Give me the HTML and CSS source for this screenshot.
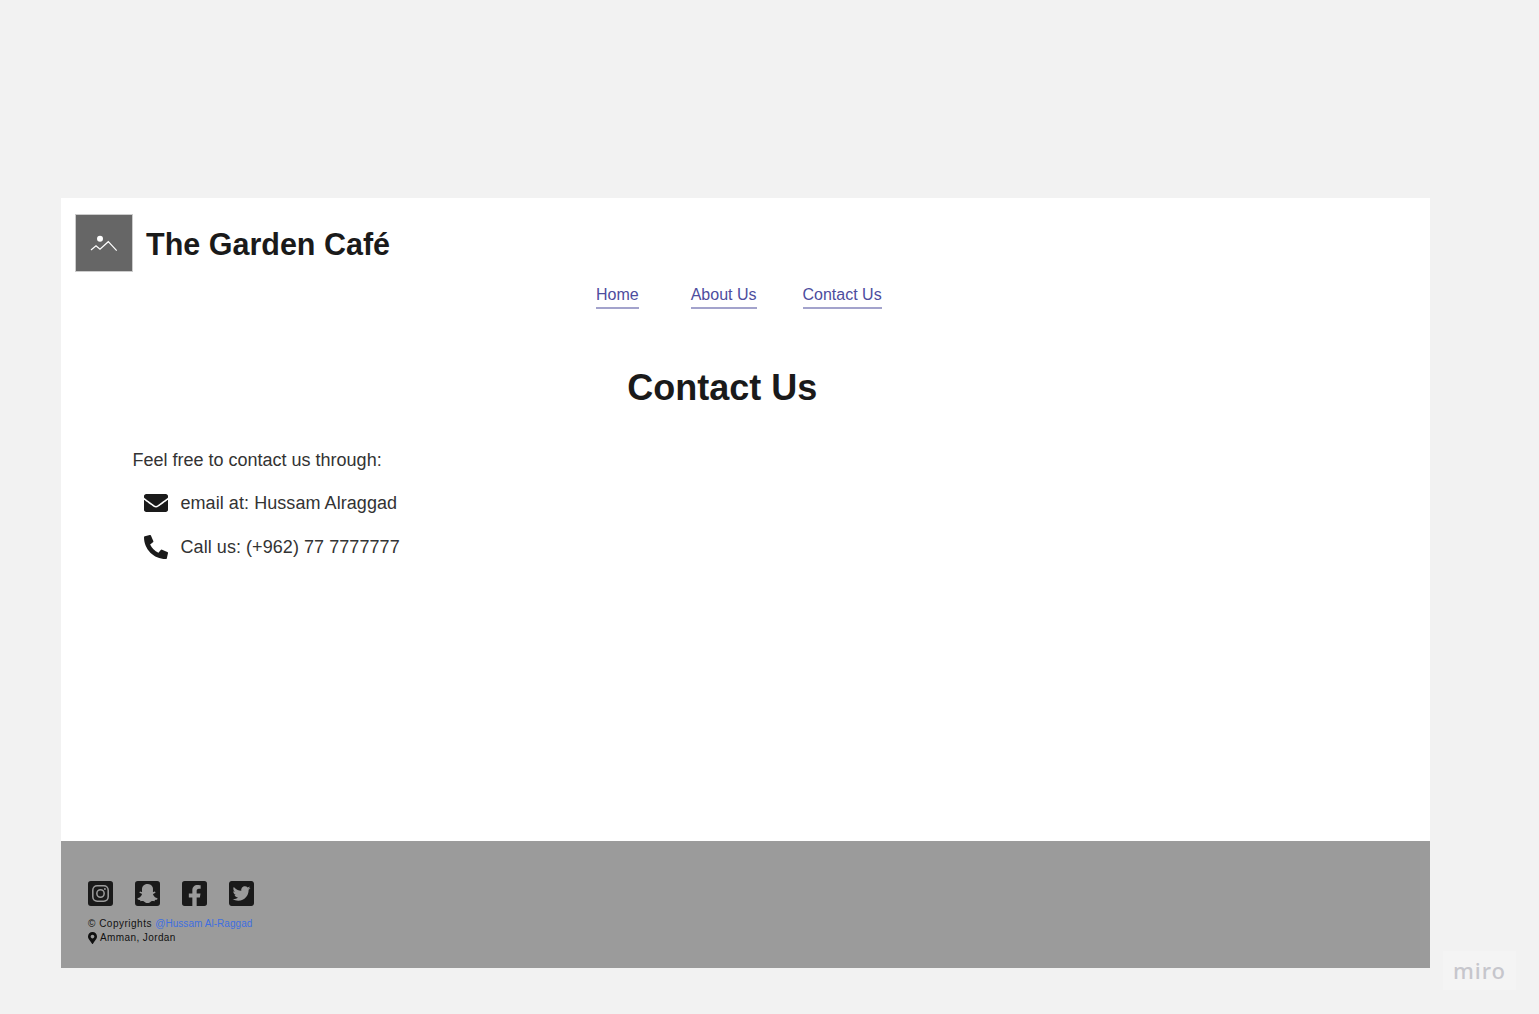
FILE: index.html
```html
<!DOCTYPE html>
<html lang="en">
  <head>
    <meta charset="UTF-8" />
    <title>The Garden Café</title>
    <link rel="stylesheet" href="styles.css">
  </head>
  <body>
    <div class="frame">
      <header>
        <div class="logo">
          <svg width="28" height="18" viewBox="0 0 28 18" fill="none">
            <circle cx="10" cy="4.700" r="3" fill="#fff" />
            <path d="M1 16 L6 11.700 L10 15.300 L18.300 7.700 L26.700 16.700" stroke="#fff" stroke-width="1.200" />
          </svg>
        </div>
        <h1>The Garden Café</h1>
      </header>
      <nav>
        <a href="#" class="home">Home</a>
        <a href="#">About Us</a>
        <a href="#">Contact Us</a>
      </nav>
      <main>
        <h2>Contact Us</h2>
        <p class="intro">Feel free to contact us through:</p>
        <ul>
          <li>
            <svg class="icon" viewBox="0 0 512 512"><path d="M502.3 190.8c3.900-3.100 9.700-.2 9.700 4.700V400c0 26.500-21.500 48-48 48H48c-26.500 0-48-21.500-48-48V195.600c0-5 5.700-7.800 9.700-4.700 22.400 17.400 52.100 39.500 154.100 113.600 21.100 15.400 56.700 47.800 92.200 47.600 35.700.3 72-32.800 92.300-47.600 102-74.100 131.600-96.300 154-113.700zM256 320c23.200.4 56.600-29.200 73.400-41.400 132.700-96.300 142.800-104.700 173.400-128.700 5.800-4.500 9.200-11.500 9.200-18.900v-19c0-26.500-21.500-48-48-48H48C21.500 64 0 85.500 0 112v19c0 7.400 3.400 14.300 9.200 18.900 30.600 23.900 40.700 32.400 173.400 128.700 16.800 12.200 50.200 41.800 73.400 41.400z"/></svg>
            email at: Hussam Alraggad
          </li>
          <li>
            <svg class="icon" viewBox="0 0 512 512"><path d="M497.390 361.800l-112-48a24 24 0 0 0-28 6.900l-49.600 60.600A370.660 370.660 0 0 1 130.600 204.110l60.600-49.600a23.940 23.940 0 0 0 6.900-28l-48-112A24.160 24.160 0 0 0 122.600.61l-104 24A24 24 0 0 0 0 48c0 256.500 207.900 464 464 464a24 24 0 0 0 23.400-18.600l24-104a24.290 24.290 0 0 0-14.010-27.600z"/></svg>
            Call us: (+962) 77 7777777
          </li>
        </ul>
      </main>
      <footer>
        <div class="social">
          <svg viewBox="0 0 26 26">
            <rect width="26" height="26" rx="3" fill="#1a1a1a" />
            <rect x="5" y="5" width="16" height="16" rx="4.500" fill="none" stroke="#9b9b9b" stroke-width="1.600" />
            <circle cx="13" cy="13" r="3.800" fill="none" stroke="#9b9b9b" stroke-width="1.600" />
            <circle cx="17.600" cy="8.400" r="1" fill="#9b9b9b" />
          </svg>
          <svg viewBox="0 0 26 26">
            <rect width="26" height="26" rx="3" fill="#1a1a1a" />
            <g transform="translate(2.500 2.500) scale(.041)">
              <path fill="#9b9b9b" d="M510.846 392.673c-5.211 12.157-27.239 21.089-67.360 27.318-2.064 2.786-3.775 14.686-6.507 23.956-1.625 5.566-5.623 8.869-12.128 8.869l-.297-.005c-9.395 0-19.203-4.323-38.852-4.323-26.521 0-35.662 6.043-56.254 20.588-21.832 15.438-42.771 28.764-74.027 27.399-31.646 2.334-58.025-16.908-72.871-27.404-20.714-14.643-29.828-20.582-56.241-20.582-18.864 0-30.736 4.720-38.852 4.720-8.073 0-11.213-4.922-12.422-9.040-2.703-9.189-4.404-21.263-6.523-24.130-20.679-3.209-67.310-11.344-68.498-32.150a10.627 10.627 0 0 1 8.877-11.069c69.583-11.455 100.924-82.901 102.227-85.934.074-.176.155-.344.237-.515 3.713-7.537 4.544-13.849 2.463-18.753-5.050-11.896-26.872-16.164-36.053-19.796-23.715-9.366-27.015-20.128-25.612-27.504 2.437-12.836 21.725-20.735 33.002-15.453 8.919 4.181 16.843 6.297 23.547 6.297 5.022 0 8.212-1.204 9.960-2.171-2.043-35.936-7.101-87.290 5.687-115.969C158.122 21.304 229.705 15.420 250.826 15.420c.944 0 9.141-.089 10.110-.089 52.148 0 102.254 26.780 126.723 81.643 12.777 28.650 7.749 79.792 5.695 116.009 1.582.872 4.357 1.942 8.599 2.139 6.397-.286 13.815-2.389 22.069-6.257 6.085-2.846 14.406-2.461 20.480.058l.029.010c9.476 3.385 15.439 10.215 15.589 17.870.184 9.747-8.522 18.165-25.878 25.018-2.118.835-4.694 1.655-7.434 2.525-9.797 3.106-24.600 7.805-28.616 17.271-2.079 4.904-1.256 11.211 2.460 18.748.087.168.166.342.239.515 1.301 3.030 32.615 74.460 102.230 85.934 6.427 1.058 11.163 7.877 7.725 15.859z"/>
            </g>
          </svg>
          <svg viewBox="0 32 448 448"><path fill="#1a1a1a" d="M400 32H48A48 48 0 0 0 0 80v352a48 48 0 0 0 48 48h137.250V327.690h-63V256h63v-54.640c0-62.150 37-96.480 93.670-96.480 27.140 0 55.520 4.840 55.520 4.840v61h-31.270c-30.810 0-40.420 19.120-40.420 38.730V256h68.780l-11 71.690h-57.780V480H400a48 48 0 0 0 48-48V80a48 48 0 0 0-48-48z"/></svg>
          <svg viewBox="0 32 448 448"><path fill="#1a1a1a" d="M400 32H48C21.500 32 0 53.500 0 80v352c0 26.500 21.500 48 48 48h352c26.500 0 48-21.500 48-48V80c0-26.500-21.500-48-48-48zm-48.900 158.800c.2 2.800.2 5.700.2 8.500 0 86.700-66 186.600-186.600 186.600-37.200 0-71.700-10.800-100.700-29.400 5.300.6 10.400.8 15.800.8 30.700 0 58.900-10.400 81.400-28-28.800-.6-53-19.500-61.300-45.500 10.100 1.500 19.200 1.500 29.600-1.200-30-6.100-52.500-32.500-52.500-64.400v-.8c8.700 4.900 18.900 7.900 29.600 8.300a65.447 65.447 0 0 1-29.200-54.600c0-12.200 3.200-23.400 8.900-33.100 32.300 39.800 80.800 65.800 135.200 68.600-9.300-44.500 24-80.600 64-80.600 18.900 0 35.900 7.900 47.900 20.700 14.800-2.800 29-8.300 41.600-15.800-4.900 15.200-15.100 28-28.600 36 13.100-1.400 25.800-5 37.500-10.100-8.900 13-20 24.600-32.800 33.800z"/></svg>
        </div>
        <p class="copy">© Copyrights <a href="#">@Hussam Al-Raggad</a></p>
        <p class="place">
          <svg width="9" height="12" viewBox="0 0 384 512"><path fill="#111" d="M172.268 501.670C26.970 291.031 0 268.413 0 192 0 85.961 85.961 0 192 0s192 85.961 192 192c0 76.413-26.970 99.031-172.268 309.670-9.535 13.774-29.930 13.773-39.464 0zM192 272c44.183 0 80-35.817 80-80s-35.817-80-80-80-80 35.817-80 80 35.817 80 80 80z"/></svg>
          Amman, Jordan
        </p>
      </footer>
    </div>
    <div class="badge">miro</div>
  </body>
</html>
```

FILE: styles.css
```css
* {
  box-sizing: border-box;
}

body {
  margin: 0;
  height: 1014px;
  padding: 198px 109px 0 61px;
  background-color: #f2f2f2;
  font-family: "Liberation Sans", Arial, sans-serif;
  overflow: hidden;
}

.frame {
  display: flex;
  flex-direction: column;
  height: 770px;
  background-color: #fff;
}

header {
  display: flex;
  align-items: center;
  gap: 13px;
  padding: 16px 14px 0;
}

.logo {
  display: flex;
  align-items: center;
  justify-content: center;
  width: 58px;
  height: 58px;
  background-color: #666;
  border: 1px solid #ccc;
}

h1 {
  margin: 3px 0 0;
  font-size: 30.500px;
  color: #1a1a1a;
}

nav {
  display: flex;
  gap: 46px;
  margin-top: 14px;
  padding-left: 535px;
}

nav a {
  padding-bottom: 3px;
  border-bottom: 2px solid #a3a3cc;
  font-size: 16px;
  color: #4d4d9e;
  text-decoration: none;
}

nav .home {
  margin-right: 6px;
}

main {
  flex: 1;
  padding: 0 0 0 71.500px;
}

h2 {
  margin: 58px 0 0;
  padding-right: 118px;
  text-align: center;
  font-size: 36px;
  color: #1a1a1a;
}

.intro {
  margin: 41px 0 0;
  font-size: 18px;
  color: #333;
}

ul {
  margin: 10px 0 0;
  padding: 0 0 0 11.500px;
  list-style: none;
}

li {
  display: flex;
  align-items: center;
  gap: 12.500px;
  height: 44px;
  font-size: 18px;
  letter-spacing: .06px;
  color: #333;
}

.icon {
  width: 24px;
  height: 24px;
  fill: #1a1a1a;
}

footer {
  height: 127px;
  padding: 40px 27px 0;
  background-color: #9b9b9b;
}

.social {
  display: flex;
  gap: 22px;
}

.social svg {
  width: 25px;
  height: 25px;
}

.copy,
.place {
  margin: 0;
  font-size: 10px;
  letter-spacing: .4px;
  line-height: 14px;
  color: #111;
}

.copy {
  margin-top: 11px;
  letter-spacing: .5px;
}

.copy a {
  color: #3f6fe0;
  letter-spacing: .05px;
  text-decoration: none;
}

.place {
  display: flex;
  align-items: center;
  gap: 3px;
}

.badge {
  position: absolute;
  left: 1443px;
  top: 951px;
  width: 73px;
  height: 39px;
  background-color: #f4f4f4;
  text-align: center;
  font-family: "Noto Sans", sans-serif;
  font-size: 22px;
  line-height: 38px;
  letter-spacing: 1px;
  font-weight: 500;
  color: #c6c6cc;
}
```
